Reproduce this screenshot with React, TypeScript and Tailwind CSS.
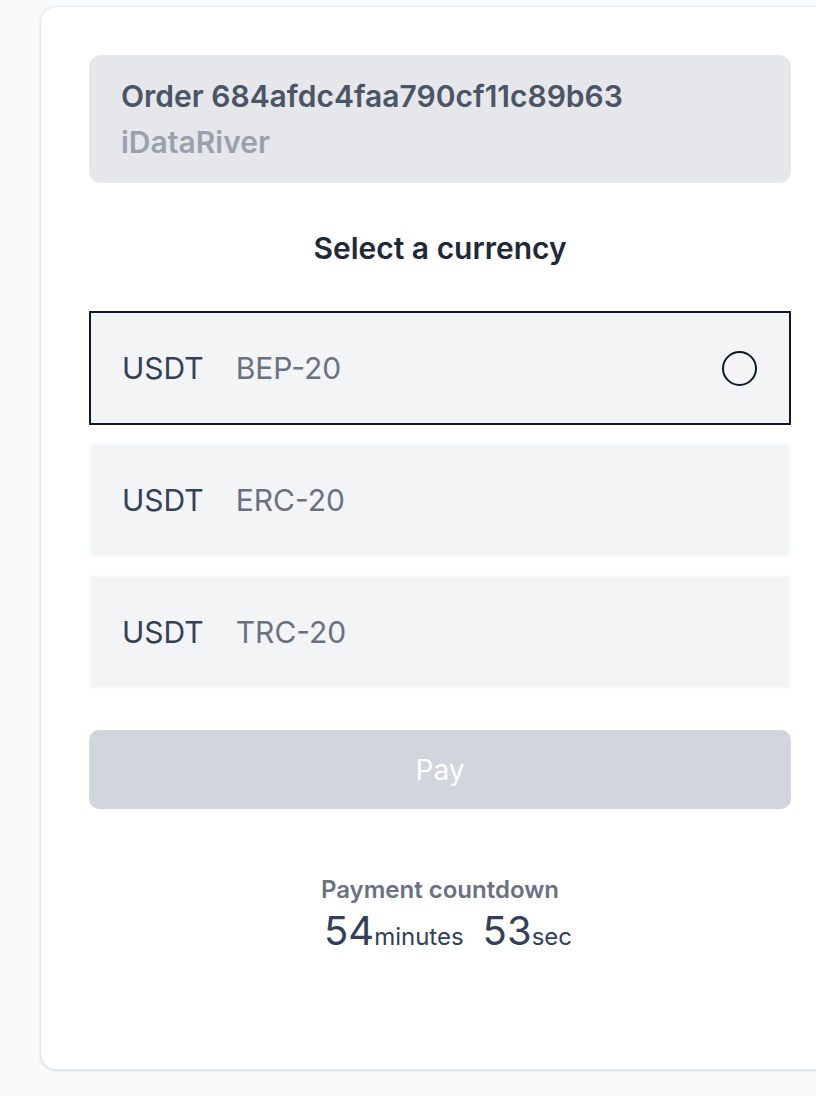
import { useState } from "react";

const currencies = [
  { coin: "USDT", network: "BEP-20" },
  { coin: "USDT", network: "ERC-20" },
  { coin: "USDT", network: "TRC-20" },
];

const App = () => {
  const [selected, setSelected] = useState(0);

  return (
    <div
      className="min-h-[1096px] w-full overflow-hidden bg-gray-50 pt-1.5"
      style={{ fontFamily: "Inter, 'Noto Sans', sans-serif" }}
    >
      <div className="ml-10 w-[800px] h-[1064px] rounded-2xl border border-gray-200 bg-white px-12 pt-12 shadow-sm">
        <div className="flex h-[128px] flex-col justify-center rounded-xl bg-gray-200 px-8">
          <h2 className="text-[30px] font-semibold leading-[46px] text-gray-600">
            Order 684afdc4faa790cf11c89b63
          </h2>
          <p className="text-[30px] font-semibold leading-[46px] text-gray-400">iDataRiver</p>
        </div>

        <h3 className="mt-[45px] text-center text-[30px] font-semibold leading-[40px] text-gray-800">
          Select a currency
        </h3>

        <div className="mt-[43px] flex flex-col gap-[18px]">
          {currencies.map((c, i) => (
            <button
              key={c.network}
              onClick={() => setSelected(i)}
              className={
                i === selected
                  ? "flex h-[114px] items-center justify-between border-2 border-gray-900 bg-gray-100 pl-[31px] pr-[32px]"
                  : "flex h-[114px] items-center justify-between border-2 border-gray-50 bg-gray-100 pl-[31px] pr-[32px]"
              }
            >
              <span className="flex items-center gap-[32px] text-[30px]">
                <span className="text-slate-700">{c.coin}</span>
                <span className="text-gray-500">{c.network}</span>
              </span>
              {i === selected && (
                <span className="h-[35px] w-[35px] rounded-full border-2 border-gray-900" />
              )}
            </button>
          ))}
        </div>

        <button className="mt-[41px] flex h-[79px] w-full items-center justify-center rounded-[10px] bg-gray-300 text-[28px] text-white">
          Pay
        </button>

        <div className="mt-[64px] flex flex-col items-center">
          <p className="text-[24px] font-semibold leading-[34px] text-gray-500">Payment countdown</p>
          <p className="flex items-baseline pl-[16px] leading-[48px] text-slate-700">
            <span className="text-[40px]">54</span>
            <span className="text-[24px]">minutes</span>
            <span className="ml-[19px] text-[40px]">53</span>
            <span className="text-[24px]">sec</span>
          </p>
        </div>
      </div>
    </div>
  );
};

export default App;
